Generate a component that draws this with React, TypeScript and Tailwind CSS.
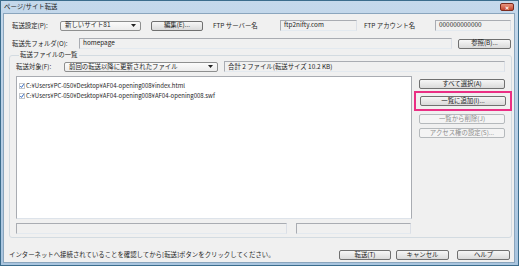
import React from 'react';

const font = { fontFamily: '"Noto Sans CJK JP", "Noto Sans", sans-serif' };

function Btn({ children, w, disabled }: { children: React.ReactNode; w: string; disabled?: boolean }) {
    return (
        <div
            className={`${w} h-[10px] shrink-0 flex items-center justify-center rounded-[2px] border leading-none ${
                disabled
                    ? 'border-[#b5b9bc] bg-[#f4f4f4] text-[#8d8d8d]'
                    : 'border-[#707070] bg-gradient-to-b from-[#f6f6f6] to-[#dadada] text-[#222]'
            }`}
        >
            {children}
        </div>
    );
}

function Field({ children, w, white }: { children?: React.ReactNode; w: string; white?: boolean }) {
    return (
        <div
            className={`${w} h-[11px] shrink-0 flex items-center pl-[3px] border border-[#a9acb2] border-b-[#e3e9ef] border-r-[#dbdfe6] leading-none overflow-hidden whitespace-nowrap ${
                white ? 'bg-white' : 'bg-[#f0f0f0]'
            }`}
        >
            {children}
        </div>
    );
}

function Select({ children, w }: { children: React.ReactNode; w: string }) {
    return (
        <div className={`${w} h-[10px] shrink-0 flex items-center justify-between pl-[4px] pr-[4px] rounded-[2px] border border-[#8e8f8f] bg-gradient-to-b from-[#fbfbfb] to-[#ececec] leading-none whitespace-nowrap`}>
            <span>{children}</span>
            <svg width="5" height="3" viewBox="0 0 5 3">
                <path d="M0 0h5L2.5 3z" fill="#222" />
            </svg>
        </div>
    );
}

function Check() {
    return (
        <svg width="6" height="6" viewBox="0 0 6 6" className="mr-[1px] shrink-0">
            <rect x="0.5" y="0.5" width="5" height="5" fill="#fff" stroke="#c3c7cc" />
            <path d="M1.3 3.1 2.5 4.4 4.8 1.2" fill="none" stroke="#2b63c0" strokeWidth="1" />
        </svg>
    );
}

const files = [
    'C:¥Users¥PC-050¥Desktop¥AF04-opening008¥index.html',
    'C:¥Users¥PC-050¥Desktop¥AF04-opening008¥AF04-opening008.swf',
];

export default function App() {
    return (
        <div style={font} className="w-[519px] h-[266px] flex flex-col border border-[#3b6c8c] bg-gradient-to-b from-[#c4d8eb] to-[#a9c5df] text-[6.4px] text-[#1e1e1e]">
            {/* title bar */}
            <div className="h-[12px] shrink-0 flex items-center justify-between pl-[3px] pr-[4px]">
                <span className="leading-none">ページ/サイト転送</span>
                <div className="w-[14px] h-[8px] rounded-[2px] border border-[#7a2a1e] bg-gradient-to-b from-[#e8957f] to-[#c4432a] flex items-center justify-center text-white text-[5px] leading-none font-bold">
                    ✕
                </div>
            </div>

            {/* content */}
            <div className="flex-1 ml-[2px] mr-[3px] mb-[2px] bg-[#f0f0f0] border border-[#8aa5bd] flex flex-col">
                {/* row 1 */}
                <div className="flex items-center pl-[8px] mt-[6px]">
                    <span className="w-[48px] shrink-0">転送設定(P):</span>
                    <Select w="w-[81px]">新しいサイト81</Select>
                    <div className="ml-[10px]">
                        <Btn w="w-[52px]">編集(E)...</Btn>
                    </div>
                    <span className="ml-[10px] w-[67px] shrink-0">FTP サーバー名</span>
                    <Field w="w-[77px]">ftp2nifty.com</Field>
                    <span className="ml-[7px] w-[71px] shrink-0">FTP アカウント名</span>
                    <Field w="w-[76px]">000000000000</Field>
                </div>

                {/* row 2 */}
                <div className="flex items-center pl-[8px] mt-[7px]">
                    <span className="w-[67px] shrink-0">転送先フォルダ(O):</span>
                    <Field w="w-[373px]">homepage</Field>
                    <div className="ml-[6px]">
                        <Btn w="w-[53px]">参照(B)...</Btn>
                    </div>
                </div>

                {/* group */}
                <fieldset className="mx-[5px] mt-[3px] border border-[#d3dbe1] rounded-[3px] pl-[6px] pr-[4px] pb-[3px]">
                    <legend className="ml-[3px] px-[1px] leading-none">転送ファイルの一覧</legend>
                    <div className="flex items-center mt-[3px]">
                        <span className="w-[48px] shrink-0">転送対象(F):</span>
                        <Select w="w-[154px]">前回の転送以降に更新されたファイル</Select>
                        <div className="ml-[6px]">
                            <Field w="w-[281px]">合計 2 ファイル(転送サイズ 10.2 KB)</Field>
                        </div>
                    </div>

                    <div className="flex mt-[4px]">
                        <div className="flex flex-col">
                            <div className="w-[396px] h-[143px] border border-[#a9acb2] border-b-[#dde3ea] bg-white pt-[6px] pl-[2px] flex flex-col gap-[4px]">
                                {files.map((f) => (
                                    <div key={f} className="flex items-center leading-none whitespace-nowrap text-[6px]">
                                        <Check />
                                        <span>{f}</span>
                                    </div>
                                ))}
                            </div>
                            <div className="flex mt-[4px] gap-[9px]">
                                <Field w="w-[271px]" />
                                <Field w="w-[115px]" />
                            </div>
                        </div>

                        <div className="ml-[7px] flex flex-col pt-[3px]">
                            <Btn w="w-[86px]">すべて選択(A)</Btn>
                            <div className="mt-[2px] -mx-[5px] px-[4px] py-[3px] border-2 border-[#ea2f84]">
                                <Btn w="w-[86px]">一覧に追加(I)...</Btn>
                            </div>
                            <div className="mt-[3px]">
                                <Btn w="w-[86px]" disabled>一覧から削除(J)</Btn>
                            </div>
                            <div className="mt-[4px]">
                                <Btn w="w-[86px]" disabled>アクセス権の設定(S)...</Btn>
                            </div>
                        </div>
                    </div>
                </fieldset>

                {/* bottom */}
                <div className="flex items-center mt-auto mb-[2px] pl-[5px]">
                    <span className="flex-1 whitespace-nowrap">
                        インターネットへ接続されていることを確認してから[転送]ボタンをクリックしてください。
                    </span>
                    <div className="flex gap-[5px] pr-[4px]">
                        <Btn w="w-[52px]">転送(T)</Btn>
                        <Btn w="w-[53px]">キャンセル</Btn>
                        <div className="ml-[3px]">
                            <Btn w="w-[53px]">ヘルプ</Btn>
                        </div>
                    </div>
                </div>
            </div>
        </div>
    );
}
